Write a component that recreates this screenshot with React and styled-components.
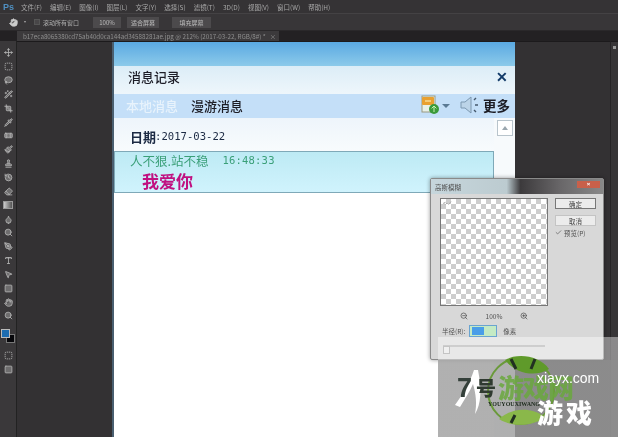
import React from "react";
import styled, { createGlobalStyle } from "styled-components";
import {
  Move, Lasso, Wand2, Crop, Pipette, Bandage, History, Eraser, Droplet, Search,
  PenTool, Type, MousePointer2, Square, Hand, ZoomIn, ZoomOut, Check, SquareDashed, Paintbrush, Stamp,
} from "lucide-react";

const cjk = `"Noto Sans CJK SC", "Liberation Sans", sans-serif`;

const Global = createGlobalStyle`
  html, body { margin: 0; padding: 0; background: #333; }
  * { box-sizing: border-box; }
`;

const Page = styled.div`
  position: relative;
  width: 618px;
  height: 437px;
  overflow: hidden;
  display: flex;
  flex-direction: column;
  background: #323032;
  font-family: ${cjk};
  filter: blur(0.55px);
`;

const MenuBar = styled.div`
  height: 13px;
  display: flex;
  align-items: center;
  gap: 8px;
  padding-left: 3px;
  background: #353335;
  color: #a8a8a8;
  font-size: 6.5px;
`;

const Logo = styled.span`
  color: #4f8fc0;
  font: bold 9px "Liberation Sans", sans-serif;
  margin-right: -1px;
`;

const OptionsBar = styled.div`
  height: 18px;
  display: flex;
  align-items: center;
  background: #383638;
  border-top: 1px solid #444244;
  border-bottom: 1px solid #2a282a;
  padding-left: 9px;
  color: #b0b0b0;
  font-size: 6px;
`;

const Caret = styled.span`
  width: 0;
  height: 0;
  margin: 0 8px 0 6px;
  border: 1.5px solid transparent;
  border-top: 2px solid #aaa;
`;

const TinyCheck = styled.span`
  width: 6px;
  height: 6px;
  background: #484648;
  border: 1px solid #555;
  margin-right: 3px;
`;

const OptionButton = styled.span`
  height: 11px;
  width: ${(p) => p.$w}px;
  margin-left: ${(p) => p.$ml}px;
  display: flex;
  align-items: center;
  justify-content: center;
  background: #4c4a4c;
  color: #bdbdbd;
`;

const TabBar = styled.div`
  height: 10px;
  display: flex;
  background: #232123;
  padding-left: 17px;
`;

const Tab = styled.div`
  width: 262px;
  height: 10px;
  padding-left: 6px;
  display: flex;
  align-items: center;
  gap: 4px;
  background: #3c3a3c;
  color: #8f8f8f;
  font: 6.25px ${cjk};
  white-space: nowrap;
  overflow: hidden;
`;

const Workspace = styled.div`
  flex: 1;
  display: flex;
  min-height: 0;
`;

const ToolBar = styled.div`
  width: 17px;
  flex: none;
  display: flex;
  flex-direction: column;
  align-items: center;
  padding-top: 5px;
  background: #3a383a;
  border-right: 1px solid #222;
  color: #b4b4b4;
`;

const Tool = styled.span`
  height: 13.85px;
  width: 100%;
  flex: none;
  display: flex;
  align-items: center;
  justify-content: center;
  svg { width: 9px; height: 9px; fill: rgba(190, 190, 190, 0.4); stroke-width: 2.2; }
`;

const GradientTool = styled.span`
  width: 10px;
  height: 8px;
  border: 1px solid #999;
  background: linear-gradient(90deg, #ccc, #555);
`;

const Swatches = styled.div`
  position: relative;
  width: 14px;
  height: 19px;
  margin: 3px 0 4px;
`;

const Foreground = styled.span`
  position: absolute;
  left: 0;
  top: 3px;
  width: 9px;
  height: 9px;
  background: #1d6cb0;
  border: 1px solid #bbb;
`;

const Background = styled.span`
  position: absolute;
  left: 5px;
  top: 8px;
  width: 9px;
  height: 9px;
  background: #06060a;
  border: 1px solid #777;
`;

const Canvas = styled.div`
  flex: 1;
  display: flex;
  background: #333133;
  padding-left: 95px;
  padding-right: 95px;
  border-top: 1px solid #1c1a1c;
`;

const Rail = styled.div`
  width: 8px;
  flex: none;
  background: #373537;
  border-left: 1px solid #262426;
  border-top: 1px solid #1c1a1c;
  display: flex;
  justify-content: center;
  padding-top: 4px;
  &::before {
    content: "";
    width: 3px;
    height: 3px;
    background: #999;
  }
`;

const Doc = styled.div`
  flex: 1;
  display: flex;
  flex-direction: column;
  background: #fff;
  border-left: 2px solid #4a5f70;
`;

const Banner = styled.div`
  height: 24px;
  background: linear-gradient(180deg, #5aa9e2, #8ccaea);
`;

const TitleRow = styled.div`
  height: 28px;
  display: flex;
  align-items: center;
  justify-content: space-between;
  padding: 0 7px 7px 14px;
  background: linear-gradient(180deg, #dcedf7, #eef6fb);
  color: #1e1e28;
  font-size: 13px;
  font-weight: 500;
`;

const CloseMark = styled.span`
  color: #123a68;
  font: bold 14px "Liberation Sans", sans-serif;
`;

const TabRow = styled.div`
  height: 24px;
  display: flex;
  align-items: center;
  padding: 0 5px 2px 12px;
  background: #c4dff8;
  font-size: 13px;
  font-weight: 500;
  color: #1c1c24;
`;

const DocTab = styled.span`
  margin-right: 13px;
  color: ${(p) => (p.$dim ? "#e8f3fc" : "#1c1c24")};
`;

const TabSpacer = styled.span`
  flex: 1;
`;

const DropCaret = styled.span`
  width: 0;
  height: 0;
  margin: 2px 10px 0 3px;
  border: 4px solid transparent;
  border-top: 4px solid #5a7a94;
  border-bottom: none;
`;

const MoreText = styled.span`
  margin-left: 3px;
  font-weight: 600;
  font-size: 13.5px;
`;

const Body = styled.div`
  flex: 1;
  display: flex;
  min-height: 0;
`;

const Messages = styled.div`
  flex: 1;
  display: flex;
  flex-direction: column;
`;

const DateRow = styled.div`
  height: 33px;
  display: flex;
  align-items: center;
  padding: 3px 0 0 16px;
  background: linear-gradient(180deg, #eef5fb, #f8fbfd);
  color: #1c2a44;
  font: 10.6px "DejaVu Sans Mono", monospace;
  b { font: bold 13px ${cjk}; margin-right: -1px; }
`;

const MessageBox = styled.div`
  height: 42px;
  padding: 0 0 0 15px;
  border: 1px solid #7fa9b8;
  background: linear-gradient(180deg, #bdeaf4, #d0f3fd);
`;

const Sender = styled.div`
  height: 16px;
  display: flex;
  align-items: center;
  color: #3a9f78;
  font-size: 12.5px;
  span { margin-left: 14px; font: 10.5px "DejaVu Sans Mono", monospace; letter-spacing: 0.2px; }
`;

const MessageText = styled.div`
  margin: 3px 0 0 12px;
  color: #c01080;
  font-size: 17px;
  font-weight: 700;
  line-height: 20px;
`;

const Scroll = styled.div`
  width: 21px;
  flex: none;
  padding: 2px 2px 0 3px;
  background: #f7fafc;
`;

const ScrollButton = styled.div`
  height: 16px;
  display: flex;
  align-items: center;
  justify-content: center;
  background: #fff;
  border: 1px solid #b8c4cc;
  &::before {
    content: "";
    border: 3px solid transparent;
    border-bottom: 4px solid #9aa6ae;
    border-top: none;
  }
`;

const Dialog = styled.div`
  position: absolute;
  left: 430px;
  top: 178px;
  width: 174px;
  height: 182px;
  display: flex;
  flex-direction: column;
  background: #d8d8d8;
  border: 1px solid #8a8a8a;
  border-radius: 2px;
  box-shadow: 0 0 4px rgba(0, 0, 0, 0.4);
  font-size: 6.5px;
  color: #505050;
`;

const DialogTitle = styled.div`
  height: 15px;
  flex: none;
  display: flex;
  align-items: center;
  justify-content: space-between;
  padding: 0 3px 0 4px;
  background: linear-gradient(90deg, #c6d6dc 0, #bccbd0 44%, #3c3a3c 52%, #6a686a 76%, #888 100%);
`;

const DialogClose = styled.span`
  width: 23px;
  height: 7px;
  margin-top: -5px;
  background: #c8604a;
  color: #fff;
  font: bold 6px/7px "Liberation Sans", sans-serif;
  text-align: center;
`;

const DialogMain = styled.div`
  flex: 1;
  display: flex;
  padding: 4px 7px 0 9px;
`;

const LeftColumn = styled.div`
  width: 108px;
  display: flex;
  flex-direction: column;
`;

const Preview = styled.div`
  height: 108px;
  padding: 1px 2px;
  border: 1px solid #777;
  background-color: #fff;
  background-image:
    linear-gradient(45deg, #cdcdcd 25%, transparent 25%, transparent 75%, #cdcdcd 75%),
    linear-gradient(45deg, #cdcdcd 25%, transparent 25%, transparent 75%, #cdcdcd 75%);
  background-size: 10px 10px;
  background-position: 0 0, 5px 5px;
  font: 5px/6px "Liberation Sans", sans-serif;
  color: #777;
`;

const ZoomRow = styled.div`
  height: 17px;
  margin-top: 1px;
  display: flex;
  align-items: center;
  justify-content: center;
  gap: 18px;
  svg { width: 8px; height: 8px; color: #444; }
`;

const RadiusRow = styled.div`
  height: 14px;
  display: flex;
  align-items: center;
  padding-left: 2px;
`;

const RadiusInput = styled.span`
  width: 28px;
  height: 12px;
  margin: 0 6px 0 4px;
  display: flex;
  align-items: center;
  padding-left: 2px;
  background: #c4eac4;
  border: 1px solid #6aa4d0;
  i { width: 12px; height: 8px; background: #4a9ee8; }
`;

const Slider = styled.div`
  position: relative;
  height: 2px;
  width: 102px;
  margin: 7px 0 0 3px;
  background: #aaa;
  &::after {
    content: "";
    position: absolute;
    left: 0;
    top: 1px;
    width: 5px;
    height: 6px;
    background: #e6e6e6;
    border: 1px solid #999;
  }
`;

const RightColumn = styled.div`
  margin-left: 7px;
  flex: 1;
  display: flex;
  flex-direction: column;
  gap: 6px;
`;

const DialogButton = styled.div`
  height: 11px;
  display: flex;
  align-items: center;
  justify-content: center;
  background: #ececec;
  border: 1px solid ${(p) => (p.$main ? "#777" : "#c4c4c4")};
  color: #444;
`;

const PreviewCheck = styled.div`
  height: 7px;
  margin-top: -3px;
  display: flex;
  align-items: center;
  gap: 2px;
  svg { width: 7px; height: 7px; color: #444; }
`;

const Watermark = styled.div`
  position: absolute;
  left: 438px;
  top: 337px;
  width: 180px;
  height: 100px;
  background: linear-gradient(180deg, rgba(255, 255, 255, 0.42) 0, rgba(255, 255, 255, 0.42) 23%, rgba(159, 159, 159, 0.82) 23%);
  overflow: hidden;
`;

const Globe = styled.svg`
  position: absolute;
  left: 45px;
  top: 16px;
  width: 76px;
  height: 76px;
`;

const Stroke = styled.svg`
  position: absolute;
  left: 14px;
  top: 32px;
  width: 34px;
  height: 46px;
`;

const BrandSeven = styled.span`
  position: absolute;
  left: 19px;
  top: 38px;
  color: #34403a;
  font: bold 27px/27px "Liberation Sans", sans-serif;
`;

const BrandHao = styled.span`
  position: absolute;
  left: 38px;
  top: 39px;
  color: #2f3a30;
  font: 900 20px/24px ${cjk};
  white-space: nowrap;
`;

const BrandName = styled.span`
  position: absolute;
  left: 60px;
  top: 37px;
  color: #6aa83e;
  font: 900 26px/26px ${cjk};
  letter-spacing: -1px;
  white-space: nowrap;
  opacity: 0.85;
`;

const BrandPinyin = styled.span`
  position: absolute;
  left: 50px;
  top: 64px;
  color: #1c2a1c;
  font: bold 6px/6px "Liberation Serif", serif;
  white-space: nowrap;
`;

const Domain = styled.span`
  position: absolute;
  left: 99px;
  top: 33px;
  color: #fff;
  font: 14px/16px "Liberation Sans", sans-serif;
`;

const BrandGame = styled.span`
  position: absolute;
  left: 99px;
  top: 60px;
  color: #fff;
  font: 900 26px/30px ${cjk};
  letter-spacing: 3px;
  white-space: nowrap;
`;

const menu = ["文件(F)", "编辑(E)", "图像(I)", "图层(L)", "文字(Y)", "选择(S)", "滤镜(T)", "3D(D)", "视图(V)", "窗口(W)", "帮助(H)"];
const toolsTop = [Move, SquareDashed, Lasso, Wand2, Crop, Pipette, Bandage, Paintbrush, Stamp, History, Eraser];
const toolsMid = [Droplet, Search, PenTool, Type, MousePointer2, Square, Hand, Search];

export default function App() {
  return (
    <Page>
      <Global />
      <MenuBar>
        <Logo>Ps</Logo>
        {menu.map((m) => <span key={m}>{m}</span>)}
      </MenuBar>
      <OptionsBar>
        <Hand size={9} fill="#ccc" color="#ccc" />
        <Caret />
        <TinyCheck />
        <span>滚动所有窗口</span>
        <OptionButton $w={28} $ml={14}>100%</OptionButton>
        <OptionButton $w={32} $ml={6}>适合屏幕</OptionButton>
        <OptionButton $w={39} $ml={13}>填充屏幕</OptionButton>
      </OptionsBar>
      <TabBar>
        <Tab>
          <span>b17eca8065380cd75ab40d0ca144ad34588281ae.jpg @ 212% (2017-03-22, RGB/8#) *</span>
          <span>×</span>
        </Tab>
      </TabBar>
      <Workspace>
        <ToolBar>
          {toolsTop.map((I, i) => <Tool key={i}><I /></Tool>)}
          <Tool><GradientTool /></Tool>
          {toolsMid.map((I, i) => <Tool key={i}><I /></Tool>)}
          <Swatches><Background /><Foreground /></Swatches>
          <Tool><SquareDashed /></Tool>
          <Tool><Square /></Tool>
        </ToolBar>
        <Canvas>
          <Doc>
            <Banner />
            <TitleRow>
              <span>消息记录</span>
              <CloseMark>✕</CloseMark>
            </TitleRow>
            <TabRow>
              <DocTab $dim>本地消息</DocTab>
              <DocTab>漫游消息</DocTab>
              <TabSpacer />
              <svg width="18" height="20" viewBox="0 0 18 20">
                <rect x="1" y="1" width="13" height="16" fill="#e8f0e8" stroke="#9a9a80" />
                <rect x="1" y="2" width="12" height="8" rx="1" fill="#e8a030" />
                <path d="M4 6h6" stroke="#fff6c0" />
                <circle cx="13" cy="14" r="5" fill="#3a9a3a" />
                <path d="M13 11v6M10.6 13.4L13 11l2.4 2.4" stroke="#c8f0b0" fill="none" />
              </svg>
              <DropCaret />
              <svg width="20" height="20" viewBox="0 0 20 20">
                <path d="M1 7h4l6-5v16l-6-5H1z" fill="#bcd4e8" stroke="#7c98b0" />
                <path d="M14 5l2-2M15 10h3M14 15l2 2" stroke="#44586c" strokeWidth="1.4" fill="none" />
              </svg>
              <MoreText>更多</MoreText>
            </TabRow>
            <Body>
              <Messages>
                <DateRow><b>日期</b>:2017-03-22</DateRow>
                <MessageBox>
                  <Sender>人不狠.站不稳<span>16:48:33</span></Sender>
                  <MessageText>我爱你</MessageText>
                </MessageBox>
              </Messages>
              <Scroll><ScrollButton /></Scroll>
            </Body>
          </Doc>
        </Canvas>
        <Rail />
      </Workspace>
      <Dialog>
        <DialogTitle>
          <span>高斯模糊</span>
          <DialogClose>×</DialogClose>
        </DialogTitle>
        <DialogMain>
          <LeftColumn>
            <Preview>&lt;-⟋</Preview>
            <ZoomRow>
              <ZoomOut />
              <span>100%</span>
              <ZoomIn />
            </ZoomRow>
            <RadiusRow>
              半径(R):
              <RadiusInput><i /></RadiusInput>
              像素
            </RadiusRow>
            <Slider />
          </LeftColumn>
          <RightColumn>
            <DialogButton $main>确定</DialogButton>
            <DialogButton>取消</DialogButton>
            <PreviewCheck><Check />预览(P)</PreviewCheck>
          </RightColumn>
        </DialogMain>
      </Dialog>
      <Watermark>
        <Globe viewBox="0 0 76 76">
          <circle cx="38" cy="38" r="33" fill="none" stroke="#6a9a3a" strokeWidth="2" />
          <path d="M22 7C34 0 56 2 66 16 54 24 34 22 22 7z" fill="#5f9a2a" />
          <path d="M16 66c12 8 34 8 46-2-14-10-32-10-46 2z" fill="#8ab84a" />
          <path d="M28 6l5 10M52 6l-4 10M28 70l4-8" stroke="#223022" strokeWidth="3" />
        </Globe>
        <Stroke viewBox="0 0 34 46">
          <path d="M22 1C18 14 10 26 3 36l5 2C14 28 18 22 21 15c3 10 4 20 2 30 6-10 7-24 3-44z" fill="#fff" />
        </Stroke>
        <BrandSeven>7</BrandSeven>
        <BrandHao>号</BrandHao>
        <BrandName>游戏网</BrandName>
        <BrandPinyin>YOUYOUXIWANG</BrandPinyin>
        <Domain>xiayx.com</Domain>
        <BrandGame>游戏</BrandGame>
      </Watermark>
    </Page>
  );
}
